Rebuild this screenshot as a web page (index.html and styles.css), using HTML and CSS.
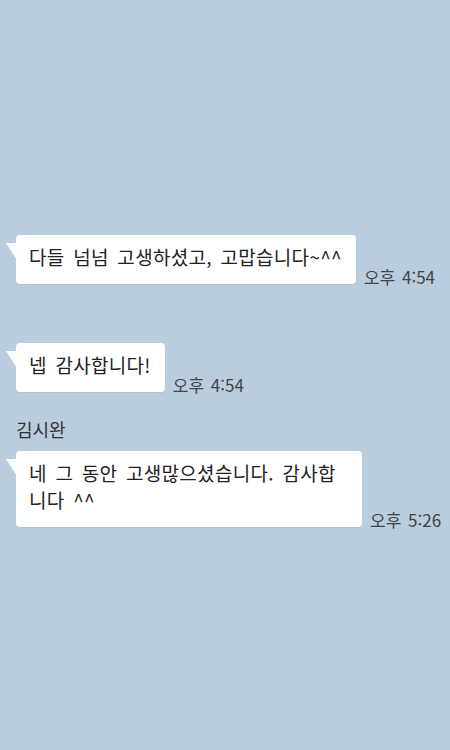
FILE: index.html
```html
<!DOCTYPE html>
<html lang="ko">
<head>
  <meta charset="UTF-8">
  <meta name="viewport" content="width=device-width, initial-scale=1.0">
  <title>채팅</title>
  <link rel="stylesheet" href="styles.css">
</head>
<body>
  <!-- 채팅 영역 -->
  <div class="chat">
    <div class="msg-row first">
      <div class="bubble">다들 넘넘 고생하셨고, 고맙습니다~^^</div>
      <span class="time">오후 4:54</span>
    </div>

    <div class="msg-row second">
      <div class="bubble">넵 감사합니다!</div>
      <span class="time">오후 4:54</span>
    </div>

    <!-- 보낸 사람 이름 -->
    <div class="name">김시완</div>
    <div class="msg-row">
      <div class="bubble">네 그 동안 고생많으셨습니다. 감사합니다 ^^</div>
      <span class="time">오후 5:26</span>
    </div>
  </div>
</body>
</html>
```

FILE: styles.css
```css
html, body {
  height: 100%;
}

body {
  margin: 0;
  background-color: #bacdde;
  font-family: "Noto Sans CJK KR", "Noto Sans", sans-serif;
  color: #222;
}

.chat {
  padding: 235px 0 0 16px;
}

.msg-row {
  display: flex;
  align-items: flex-end;
  gap: 8px;
}

.msg-row.first {
  margin-bottom: 59px;
}

.msg-row.second {
  margin-bottom: 26px;
}

.bubble {
  position: relative;
  max-width: 346px;
  box-sizing: border-box;
  padding: 8px 14px 14px 13px;
  background-color: #fff;
  border-radius: 4px;
  font-size: 19px;
  line-height: 27px;
  letter-spacing: 0.3px;
  word-spacing: 3px;
  box-shadow: 0 1px 1px rgba(0, 0, 0, 0.06);
}

/* 말풍선 꼬리 */
.bubble::before {
  content: "";
  position: absolute;
  top: 8px;
  left: -10px;
  width: 11px;
  height: 17px;
  background-color: #fff;
  clip-path: polygon(0 0, 100% 0, 100% 100%);
}

.time {
  font-size: 17px;
  line-height: 14px;
  word-spacing: 2px;
  color: #444;
  white-space: nowrap;
}

.name {
  font-size: 18px;
  line-height: 22px;
  color: #333;
  margin-bottom: 11px;
}
```
